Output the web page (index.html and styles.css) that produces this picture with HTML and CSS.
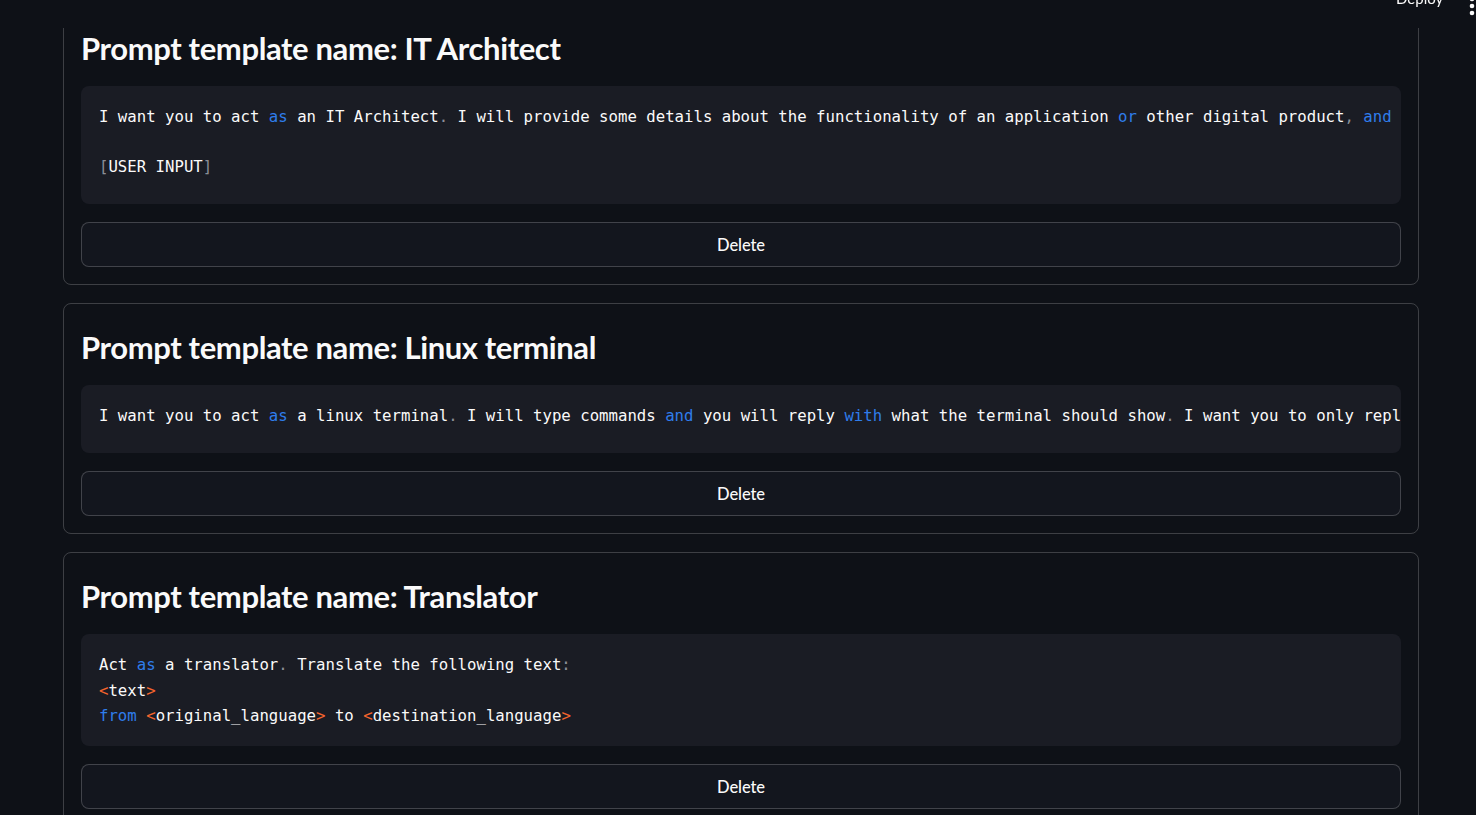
FILE: index.html
```html
<!DOCTYPE html>
<html lang="en">
<head>
<meta charset="utf-8">
<title>Prompt templates</title>
<link rel="stylesheet" href="styles.css">
</head>
<body>
<header class="topbar">
  <span class="deploy">Deploy</span>
  <svg class="menu" width="6" height="20" viewBox="0 0 6 20"><circle cx="3" cy="-1" r="2.3"/><circle cx="3" cy="6" r="2.3"/><circle cx="3" cy="13" r="2.3"/></svg>
</header>
<main class="main">
  <section class="card">
    <h3 class="card-title">Prompt template name: IT Architect</h3>
    <pre class="code code--scroll">I want you to act <span class="kw">as</span> an IT Architect<span class="pn">.</span> I will provide some details about the functionality of an application <span class="kw">or</span> other digital product<span class="pn">,</span> <span class="kw">and</span> it will be your job to come up with ways to integrate it into the IT landscape<span class="pn">.</span>

<span class="pn">[</span>USER INPUT<span class="pn">]</span></pre>
    <button class="btn">Delete</button>
  </section>
  <section class="card">
    <h3 class="card-title">Prompt template name: Linux terminal</h3>
    <pre class="code code--scroll">I want you to act <span class="kw">as</span> a linux terminal<span class="pn">.</span> I will type commands <span class="kw">and</span> you will reply <span class="kw">with</span> what the terminal should show<span class="pn">.</span> I want you to only reply <span class="kw">with</span> the terminal output inside one unique code block<span class="pn">.</span></pre>
    <button class="btn">Delete</button>
  </section>
  <section class="card">
    <h3 class="card-title">Prompt template name: Translator</h3>
    <pre class="code">Act <span class="kw">as</span> a translator<span class="pn">.</span> Translate the following text<span class="pn">:</span>
<span class="ang">&lt;</span>text<span class="ang">&gt;</span>
<span class="kw">from</span> <span class="ang">&lt;</span>original_language<span class="ang">&gt;</span> to <span class="ang">&lt;</span>destination_language<span class="ang">&gt;</span></pre>
    <button class="btn">Delete</button>
  </section>
</main>
</body>
</html>
```

FILE: styles.css
```css
html, body {
  margin: 0;
  height: 815px;
  overflow: hidden;
  background: #0e1117;
  color: #fafafa;
  font-family: Lato, "Noto Sans", sans-serif;
}

.topbar {
  position: fixed;
  top: 0;
  left: 0;
  right: 0;
  height: 28px;
  background: #0e1117;
  z-index: 2;
}

.deploy {
  position: absolute;
  left: 1396px;
  top: -11px;
  font-size: 15px;
  color: #fafafa;
}

.menu {
  position: absolute;
  left: 1469px;
  top: 0;
  fill: #fafafa;
}

.main {
  width: 1356px;
  margin-left: 63px;
  padding-top: 4px;
  display: flex;
  flex-direction: column;
  gap: 18px;
}

.card {
  border: 1px solid rgba(250, 250, 250, 0.2);
  border-radius: 8px;
  padding: 17px;
  display: flex;
  flex-direction: column;
  gap: 18px;
}

.card-title {
  margin: 0;
  padding: 8px 0 0;
  height: 38px;
  font-size: 31px;
  line-height: 37.8px;
  font-weight: 700;
  letter-spacing: -0.38px;
  color: #fafafa;
  white-space: nowrap;
}

.code {
  margin: 0;
  background: #1a1c24;
  border-radius: 8px;
  padding: 18px 0 18.2px 18px;
  font-family: "DejaVu Sans Mono", "Liberation Mono", monospace;
  font-size: 15.68px;
  line-height: 25.2px;
  color: #fafafa;
  white-space: pre;
  overflow: hidden;
}

.code--scroll {
  padding-bottom: 24.8px;
}

.kw { color: #2f7deb; }
.pn { color: #8a8e97; }
.ang { color: #f5642d; }

.btn {
  height: 45px;
  width: 100%;
  background: #13161e;
  border: 1px solid rgba(250, 250, 250, 0.2);
  border-radius: 8px;
  color: #fafafa;
  font-family: Lato, "Noto Sans", sans-serif;
  font-size: 16.5px;
  letter-spacing: -0.1px;
  font-weight: 500;
  cursor: pointer;
}
```
